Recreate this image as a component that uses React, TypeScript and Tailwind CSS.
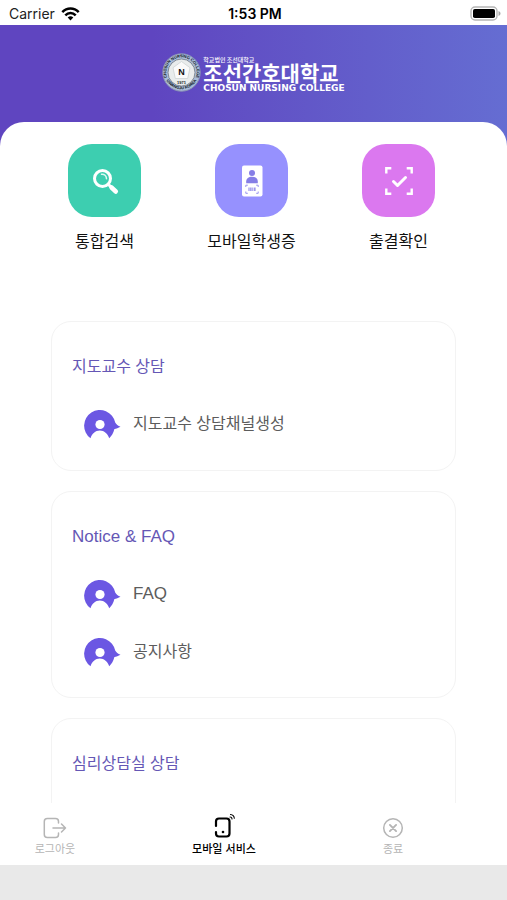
import React from "react";

const FONT = "font-['Liberation_Sans','Noto_Sans_CJK_KR',sans-serif]";

const sections = [
  { title: "지도교수 상담", latin: false, items: [{ label: "지도교수 상담채널생성", latin: false }] },
  {
    title: "Notice & FAQ",
    latin: true,
    items: [
      { label: "FAQ", latin: true },
      { label: "공지사항", latin: false },
    ],
  },
  { title: "심리상담실 상담", latin: false, items: [] },
];

function StatusBar() {
  return (
    <div className="grid h-[25px] shrink-0 grid-cols-3 items-center bg-white pl-[9px] pr-[6px] pt-0.5 font-['Inter',sans-serif] text-sm text-[#222]">
      <div className="flex items-center gap-1.5">
        <span>Carrier</span>
        <svg width="19" height="14" viewBox="0 0 19 14" fill="none" stroke="#000" strokeWidth="2.5">
          <path d="M1.3 5.2C6 .3 13 .3 17.7 5.2" />
          <path d="M4.3 8.3c3-3.1 7.4-3.1 10.4 0" />
          <path d="M6.7 10.5c1.700-1.600 3.900-1.600 5.600 0L9.500 13.600z" fill="#000" stroke="none" />
        </svg>
      </div>
      <span className="text-center font-semibold text-black">1:53 PM</span>
      <svg className="justify-self-end" width="31" height="15" viewBox="0 0 31 15">
        <rect x="1" y="1" width="26" height="13" rx="4" fill="#fff" stroke="#b5b5b5" strokeWidth="1.4" />
        <rect x="3" y="3" width="22" height="9" rx="1.8" fill="#000" />
        <path d="M28.5 5v5c1.200-.4 2-1.300 2-2.500s-.8-2.100-2-2.500z" fill="#a5a5a5" />
      </svg>
    </div>
  );
}

function Emblem() {
  return (
    <svg width="39" height="39" viewBox="0 0 39 39">
      <defs>
        <path id="ring-top" d="M5.200 24.700A15.200 15.200 0 1 1 33.800 24.700" />
        <path id="ring-bottom" d="M4.500 27.500A17.300 17.300 0 0 0 34.500 27.500" />
      </defs>
      <circle cx="19.500" cy="19.500" r="18.700" fill="#a9bcd8" stroke="#8b93b4" strokeWidth="1" />
      <g fill="#0d1420" fontFamily="Liberation Sans, sans-serif" fontSize="4" fontWeight="700">
        <text>
          <textPath href="#ring-top" startOffset="50%" textAnchor="middle">CHOSUN NURSING COLLEGE</textPath>
        </text>
        <text>
          <textPath href="#ring-bottom" startOffset="50%" textAnchor="middle">GWANGJU KOREA</textPath>
        </text>
      </g>
      <circle cx="19.500" cy="19.500" r="13.500" fill="#e9ecec" stroke="#6b7480" strokeWidth=".8" />
      <path d="M19.500 8.500l8.500 6.200-2.300 10.800H13.300L11 14.700z" fill="#fafafa" stroke="#c9cfcf" strokeWidth=".7" />
      <g fill="#111" fontFamily="Liberation Sans, sans-serif" fontWeight="700" textAnchor="middle">
        <text x="19.500" y="21.500" fontSize="9">N</text>
        <text x="19.500" y="30.500" fontSize="4">1971</text>
      </g>
    </svg>
  );
}

function SearchIcon() {
  return (
    <svg width="28" height="28" viewBox="0 0 28 28" fill="none" strokeLinecap="round">
      <circle cx="11.500" cy="11.500" r="8" stroke="#fff" strokeWidth="3" />
      <path d="M10.500 7.200c2.800-.4 5 1.600 5 4.500" stroke="#fff" strokeOpacity=".85" strokeWidth="1.500" />
      <path d="M17.500 17.500l2.500 2.500" stroke="#fff" strokeWidth="3" />
      <path d="M20.500 20.500l4.300 4" stroke="#fff" strokeWidth="4.500" />
    </svg>
  );
}

function IdCardIcon() {
  return (
    <svg width="22" height="32" viewBox="0 0 22 32">
      <rect x="1" y=".5" width="20.500" height="31" rx="2" fill="#fff" />
      <g fill="#857ee6">
        <circle cx="11" cy="8" r="3" />
        <path d="M5.200 18.300v-1.800c0-3 2.300-4.700 5.800-4.700s5.800 1.700 5.800 4.700v1.800z" />
        <path d="M7.500 22.500h1v3.500h-1zM9.300 22.500h1.200v3.500H9.300zM11.400 22.500h.9v3.500h-.9zM13.200 22.500h1.300v3.500h-1.300z" />
      </g>
      <path d="M4.800 22v-1.800h2M15.200 20.200h2V22M4.800 26.500v1.800h2M15.200 28.300h2v-1.800" fill="none" stroke="#9a94ef" strokeWidth="1" />
    </svg>
  );
}

function AttendanceIcon() {
  return (
    <svg width="30" height="30" viewBox="0 0 30 30" fill="none" stroke="#fff">
      <path d="M2.300 7.500V2.300h5M22.700 2.300h5v5.200M2.300 22.500v5.200h5M22.700 27.700h5v-5.200" strokeWidth="2.400" />
      <path d="M9.500 15.500l4 4 8-8" strokeWidth="3" strokeLinecap="round" strokeLinejoin="round" />
    </svg>
  );
}

function CounselIcon() {
  return (
    <svg width="37" height="31" viewBox="0 0 37 31">
      <path
        d="M6.500 29.300A15.700 15.700 0 1 1 31.200 13.500c1 1.800 2.800 3.200 5.300 4.300-2.200 1.300-4.200 2-6.100 2.200-1 3.800-2.600 6.900-5.200 9.300-1.600-4.700-4.900-7.800-9.400-7.800s-7.700 3.100-9.300 7.800z"
        fill="#6b57e3"
      />
      <circle cx="16" cy="15.500" r="4.600" fill="#fff" />
    </svg>
  );
}

function LogoutIcon() {
  return (
    <svg width="24" height="22" viewBox="0 0 24 22" fill="none" stroke="currentColor" strokeWidth="1.500" strokeLinecap="round" strokeLinejoin="round">
      <path d="M15.500 6V4.500c0-2-1-3-3-3H4.300c-2 0-3 1-3 3v13c0 2 1 3 3 3h8.200c2 0 3-1 3-3V16" />
      <path d="M10 11h12.500M18.500 7l4 4-4 4" />
    </svg>
  );
}

function MobileIcon() {
  return (
    <svg className="-mt-1" width="24" height="26" viewBox="0 0 24 26" fill="none" stroke="currentColor" strokeLinecap="round" strokeLinejoin="round">
      <path d="M4 13V8.500c0-2 1-3 3-3h7.500c2 0 3 1 3 3v12c0 2-1 3-3 3H7c-2 0-3-1-3-3V19" strokeWidth="2.200" />
      <circle cx="11" cy="19" r="1.300" fill="currentColor" stroke="none" />
      <path d="M18 4c1.200 0 2 .8 2 2M18.500 1.500c2.200.2 3.600 1.600 3.800 3.800" strokeWidth="1.100" />
    </svg>
  );
}

function CloseIcon() {
  return (
    <svg width="22" height="22" viewBox="0 0 22 22" fill="none" stroke="currentColor" strokeLinecap="round">
      <circle cx="11" cy="11" r="9.300" strokeWidth="1.500" />
      <path d="M7.900 7.900l6.200 6.200M14.100 7.900l-6.200 6.200" strokeWidth="1.900" />
    </svg>
  );
}

const shortcuts = [
  { label: "통합검색", color: "bg-[#3dceb0]", icon: <SearchIcon /> },
  { label: "모바일학생증", color: "bg-[#9691fe]", icon: <IdCardIcon /> },
  { label: "출결확인", color: "bg-[#db78ef]", icon: <AttendanceIcon /> },
];

const tabs = [
  { label: "로그아웃", active: false, icon: <LogoutIcon /> },
  { label: "모바일 서비스", active: true, icon: <MobileIcon /> },
  { label: "종료", active: false, icon: <CloseIcon /> },
];

export default function App() {
  return (
    <div className={`flex h-screen flex-col overflow-hidden bg-white ${FONT}`}>
      <StatusBar />

      {/* Header */}
      <header className="flex shrink-0 justify-center gap-0.5 bg-linear-to-r from-[#5f45c0] from-30% to-[#656dd2] pb-[54px] pt-7">
        <Emblem />
        <div className="flex flex-col pt-[3px] text-white">
          <span className="font-['Noto_Sans_CJK_KR',sans-serif] text-[6px] font-medium leading-[7px]">학교법인 조선대학교</span>
          <h1 className="font-['Noto_Sans_CJK_KR',sans-serif] text-[21px] font-bold leading-[19px]">조선간호대학교</h1>
          <span className="mt-0.5 font-['DejaVu_Sans',sans-serif] text-[9px] font-bold leading-[8px]">CHOSUN NURSING COLLEGE</span>
        </div>
      </header>

      <main className="-mt-6 min-h-0 flex-1 overflow-y-auto rounded-t-3xl bg-white [scrollbar-width:none]">
        {/* Shortcuts */}
        <div className="grid grid-cols-3 pl-[31px] pr-[35px] pt-[22px]">
          {shortcuts.map((s) => (
            <a key={s.label} href="#" className="flex flex-col items-center gap-[13px]">
              <span className={`flex size-[73px] items-center justify-center rounded-3xl ${s.color}`}>{s.icon}</span>
              <span className="text-base leading-6 text-[#111]">{s.label}</span>
            </a>
          ))}
        </div>

        {/* Menu cards */}
        <div className="flex flex-col gap-5 px-[51px] pt-[67px]">
          {sections.map((section) => (
            <section key={section.title} className="min-h-[150px] rounded-[20px] border border-[#f3f3f3] px-5 pb-4 pt-[33px]">
              <h2 className={`mb-4 leading-6 text-[#6557b5] ${section.latin ? "text-[17px]" : "text-base"}`}>{section.title}</h2>
              <ul>
                {section.items.map((item) => (
                  <li key={item.label}>
                    <a href="#" className="flex h-[58px] items-center gap-3 pl-3 text-[#5c5c5c]">
                      <CounselIcon />
                      <span className={`leading-6 ${item.latin ? "text-[17px]" : "text-base"}`}>{item.label}</span>
                    </a>
                  </li>
                ))}
              </ul>
            </section>
          ))}
        </div>
      </main>

      {/* Bottom tabs */}
      <nav className="grid shrink-0 grid-cols-3 bg-white pb-2 pt-3.5">
        {tabs.map((tab) => (
          <button
            key={tab.label}
            type="button"
            className={`flex w-[110px] flex-col items-center justify-end gap-0.5 text-[11px] leading-4 ${tab.active ? "font-medium text-black" : "text-[#b5b5b5]"}`}
          >
            {tab.icon}
            {tab.label}
          </button>
        ))}
      </nav>
      <div className="h-[35px] shrink-0 bg-[#e9e9e9]"></div>
    </div>
  );
}
